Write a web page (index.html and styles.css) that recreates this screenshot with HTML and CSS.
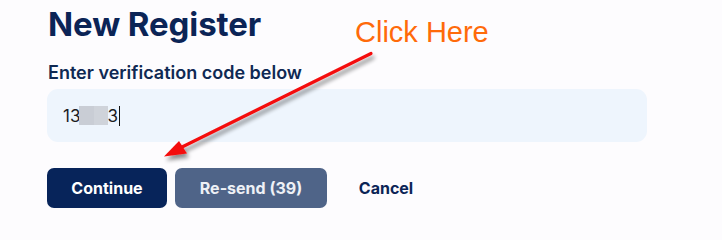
FILE: index.html
```html
<!DOCTYPE html>
<html>
<head>
<meta charset="utf-8">
<link rel="stylesheet" href="styles.css">
</head>
<body>
<main class="page">
  <h1 class="title">New Register</h1>
  <label class="label">Enter verification code below</label>
  <div class="field">
    <span class="code">13</span><span class="masked"></span><span class="code">3</span><span class="caret"></span>
  </div>
  <div class="actions">
    <button class="btn btn-primary">Continue</button>
    <button class="btn btn-muted">Re-send (39)</button>
    <button class="btn btn-link">Cancel</button>
  </div>
</main>
<div class="callout">Click Here</div>
<svg class="arrow" width="722" height="224" viewBox="0 0 722 224">
  <defs>
    <filter id="sh" x="-20%" y="-20%" width="140%" height="140%">
      <feGaussianBlur in="SourceAlpha" stdDeviation="2"/>
      <feOffset dx="2" dy="4" result="b"/>
      <feComponentTransfer><feFuncA type="linear" slope="0.45"/></feComponentTransfer>
      <feMerge><feMergeNode/><feMergeNode in="SourceGraphic"/></feMerge>
    </filter>
  </defs>
  <g filter="url(#sh)">
    <line x1="371" y1="53.5" x2="176" y2="150" stroke="#f41010" stroke-width="3.2" stroke-linecap="round"/>
    <polygon points="164,156.5 179,141 187,153.5" fill="#f41010"/>
  </g>
</svg>
</body>
</html>
```
FILE: styles.css
```css
html, body {
  margin: 0;
  padding: 0;
  background: #fdfcfe;
}
body {
  width: 722px;
  height: 224px;
  overflow: hidden;
  position: relative;
  font-family: Inter, "Noto Sans", sans-serif;
}
.page {
  padding: 4px 0 0 47px;
  display: flex;
  flex-direction: column;
  align-items: flex-start;
}
.title {
  margin: 0 0 0 1px;
  font-size: 33px;
  line-height: 40px;
  font-weight: 700;
  color: #0b2456;
  letter-spacing: -0.1px;
}
.label {
  margin: 18px 0 0 1px;
  font-size: 18px;
  line-height: 22px;
  font-weight: 600;
  color: #0f2953;
}
.field {
  margin-top: 5px;
  width: 600px;
  height: 53px;
  box-sizing: border-box;
  background: #eef5fd;
  border-radius: 11px;
  padding-left: 16px;
  display: flex;
  align-items: center;
  font-size: 17px;
  color: #1c1c1f;
}
.code {
  line-height: 20px;
}
.masked {
  display: inline-block;
  width: 29px;
  height: 19px;
  margin: 0 -1px 0 -1px;
  background: linear-gradient(90deg, #c9cdd5 0%, #c9cdd5 50%, #cfd3da 50%, #cfd3da 100%);
}
.caret {
  display: inline-block;
  width: 1px;
  height: 20px;
  background: #111;
  margin-left: 1px;
}
.actions {
  margin-top: 26px;
  display: flex;
  gap: 8px;
}
.btn {
  height: 40px;
  border: none;
  border-radius: 7px;
  font-family: Inter, "Noto Sans", sans-serif;
  font-size: 16px;
  font-weight: 700;
  padding: 0;
  cursor: pointer;
}
.btn-primary {
  width: 120px;
  background: #07245a;
  color: #ffffff;
}
.btn-muted {
  width: 152px;
  background: #4f6488;
  color: #eef1f6;
}
.btn-link {
  width: 102px;
  background: transparent;
  color: #0b2456;
}
.callout {
  position: absolute;
  left: 355px;
  top: 14px;
  font-family: "Liberation Sans", Arial, sans-serif;
  font-size: 29px;
  line-height: 36px;
  color: #ff6a0a;
}
.arrow {
  position: absolute;
  left: 0;
  top: 0;
  pointer-events: none;
}
```
